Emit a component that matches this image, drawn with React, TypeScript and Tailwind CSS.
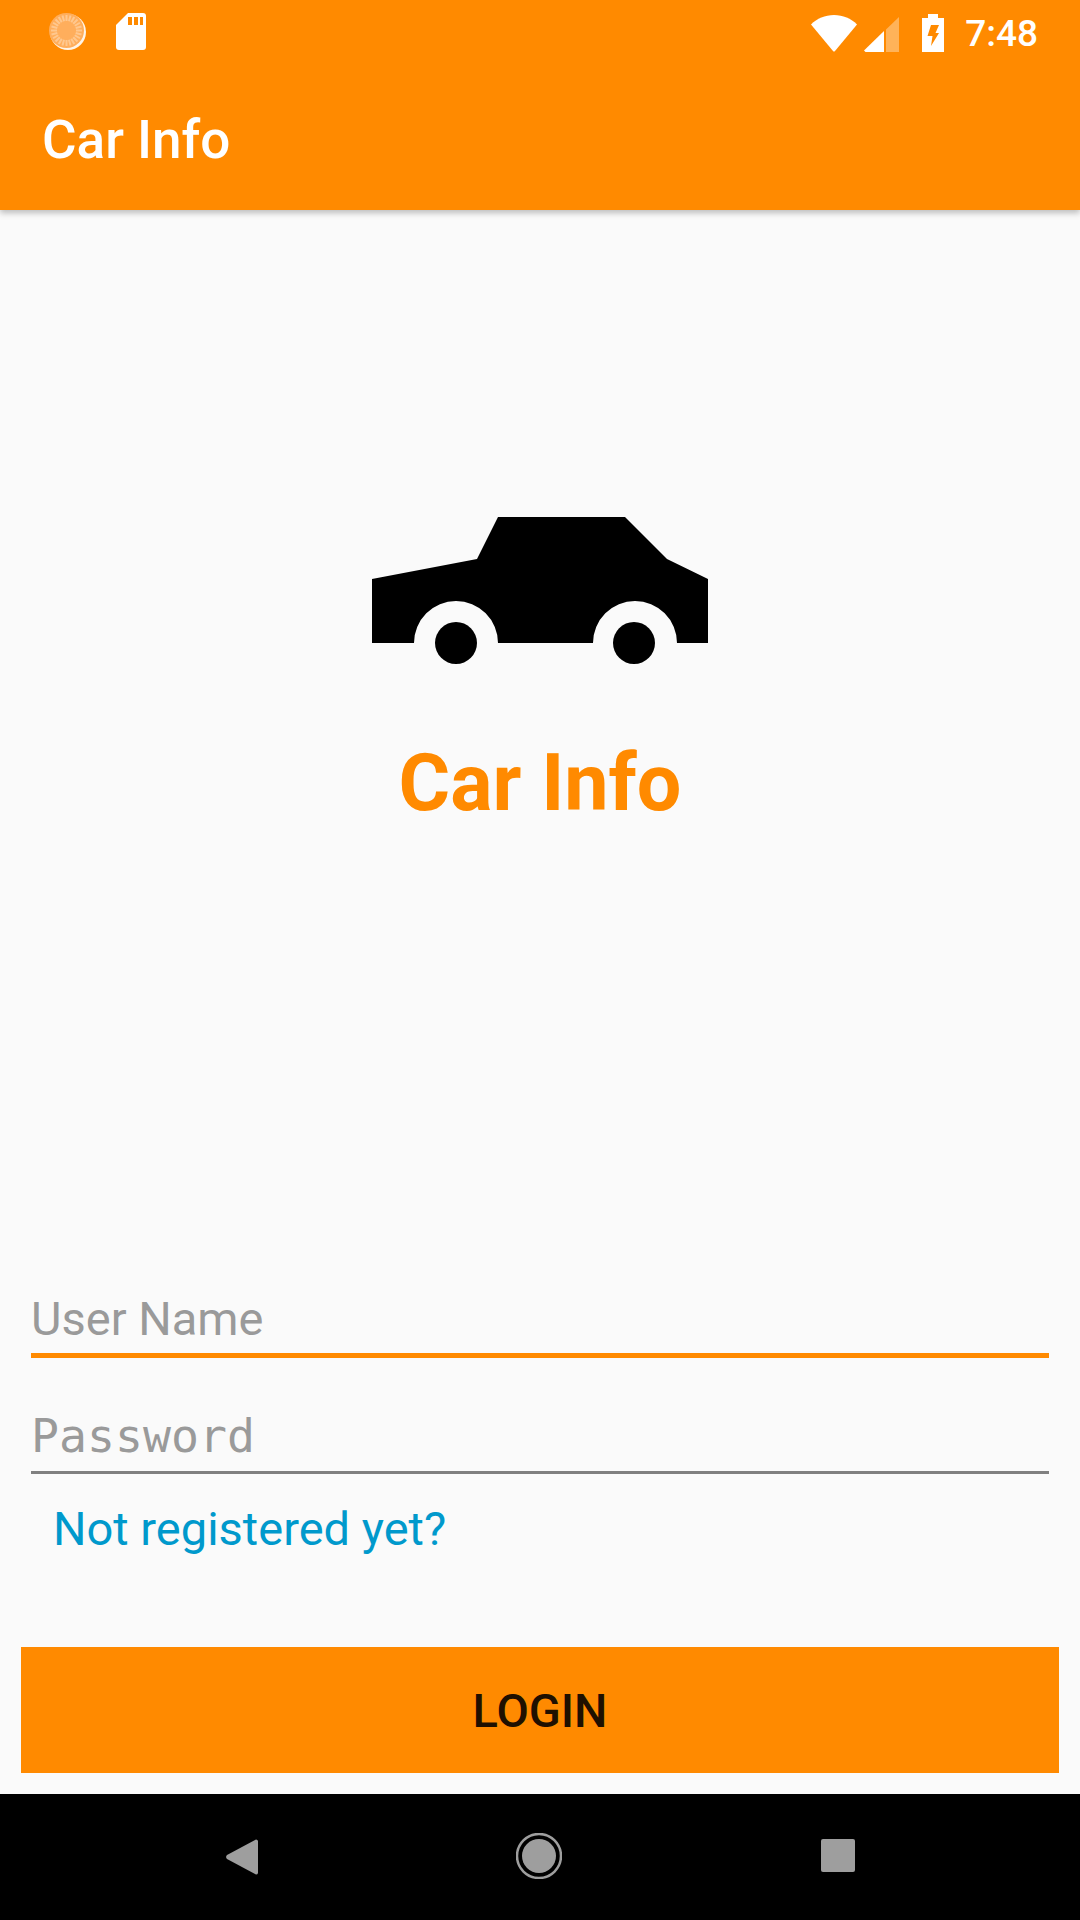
import React from 'react';

const ticks = Array.from({ length: 24 }, (_, i) => (i * 360) / 24);

const LoaderIcon = () => (
  <svg width="38" height="38" viewBox="0 0 38 38">
    <circle cx="19" cy="19" r="18" fill="#fff" opacity="0.9" />
    <circle cx="17.5" cy="17.5" r="17.5" fill="#ffae5c" />
    {ticks.map(a => (
      <line
        key={a}
        x1="17.5"
        y1="2"
        x2="17.5"
        y2="8"
        stroke="#ffc88f"
        strokeWidth="2"
        transform={`rotate(${a} 17.5 17.5)`}
      />
    ))}
  </svg>
);

const SdIcon = () => (
  <svg width="30" height="37" viewBox="0 0 30 37">
    <path
      d="M12 0H27a3 3 0 0 1 3 3V34a3 3 0 0 1-3 3H3a3 3 0 0 1-3-3V12Z"
      fill="#fff"
    />
    <rect x="12" y="4" width="4" height="8" fill="#ff8a00" />
    <rect x="18" y="4" width="4" height="8" fill="#ff8a00" />
    <rect x="24" y="4" width="3" height="8" fill="#ff8a00" />
  </svg>
);

const WifiIcon = () => (
  <svg width="46" height="37" viewBox="0 0 46 37">
    <path d="M0 9.5C6 3.5 14 0 23 0s17 3.5 23 9.5L24 36a1.4 1.4 0 0 1-2 0Z" fill="#fff" />
  </svg>
);

const SignalIcon = () => (
  <svg width="35" height="35" viewBox="0 0 35 35">
    <path d="M22 12.5 35 0V35H22Z" fill="#fff" opacity="0.35" />
    <path d="M0 33.5 20 14V35H1.5Z" fill="#fff" />
  </svg>
);

const BatteryIcon = () => (
  <svg width="22" height="38" viewBox="0 0 22 38">
    <path d="M6 0H16V4H22V38H0V4H6Z" fill="#fff" />
    <path d="M9 11H17L13.5 19H17L9 32 10.5 22H5.5Z" fill="#ff8a00" />
  </svg>
);

const CarLogo = () => (
  <svg width="336" height="147" viewBox="0 0 336 147" className="block">
    <path
      d="M126 0H253L295 42L336 62V126H305A42 42 0 0 0 221 126H126A42 42 0 0 0 42 126H0V62L105 42Z"
      fill="#000"
    />
    <circle cx="84" cy="126" r="21" fill="#000" />
    <circle cx="262" cy="126" r="21" fill="#000" />
  </svg>
);

const App: React.FC = () => {
  return (
    <div className="flex flex-col w-[1080px] h-[1920px] bg-[#fafafa] overflow-hidden font-['Roboto',sans-serif]">
      <header className="relative z-10 h-[210px] shrink-0 bg-[#ff8a00] shadow-[0_3px_6px_rgba(0,0,0,0.25)]">
        <div className="flex items-start justify-between h-[72px] pt-[13px] pl-[49px] pr-[42px]">
          <div className="flex items-start gap-[29px]">
            <LoaderIcon />
            <SdIcon />
          </div>
          <div className="flex items-center">
            <WifiIcon />
            <div className="ml-[7px] mt-[2px]">
              <SignalIcon />
            </div>
            <div className="ml-[23px]">
              <BatteryIcon />
            </div>
            <span className="ml-[21px] mt-[2px] text-[37px] leading-[38px] font-medium text-white">7:48</span>
          </div>
        </div>
        <h1 className="pl-[42px] mt-[38px] text-[53px] leading-[60px] font-medium text-white">Car Info</h1>
      </header>

      <main className="flex-1 flex flex-col items-center">
        <div className="mt-[307px]">
          <CarLogo />
        </div>
        <h2 className="mt-[73px] text-[79px] leading-[92px] font-bold text-[#ff8a00]">Car Info</h2>

        <div className="w-full px-[31px] mt-[461px]">
          <div className="h-[62px] pt-[1px] text-[47px] leading-[55px] text-[#9a9a9a] border-b-[5px] border-[#ff8a00] box-content">
            User Name
          </div>
          <div className="mt-[50px] h-[62px] pt-[1px] text-[46.5px] leading-[55px] text-[#9a9a9a] border-b-[3px] border-[#808080] box-content font-['DejaVu_Sans_Mono',monospace]">
            Password
          </div>
        </div>
        <div className="w-full pl-[53px] mt-[27px] text-[47px] leading-[55px] text-[#0099cc]">Not registered yet?</div>

        <button className="mt-[91px] w-[1038px] h-[126px] pt-[3px] bg-[#ff8a00] text-[#1f1000] text-[47px] font-medium">
          LOGIN
        </button>
      </main>

      <nav className="relative h-[126px] shrink-0 bg-black flex items-start pt-[45px] pl-[226px]">
        <svg width="32" height="36" viewBox="0 0 32 36" className="block">
          <path d="M30 0.5a2 2 0 0 1 2 1.5V34a2 2 0 0 1-2 1.5L1 20a2.6 2.6 0 0 1 0-4Z" fill="#9e9e9e" />
        </svg>
        <svg width="46" height="46" viewBox="0 0 46 46" className="block ml-[258px] -mt-[6px]">
          <circle cx="23" cy="23" r="22" fill="none" stroke="#9e9e9e" strokeWidth="2.5" />
          <circle cx="23" cy="23" r="17" fill="#9e9e9e" />
        </svg>
        <div className="ml-[259px] w-[34px] h-[33px] rounded-[2px] bg-[#9e9e9e]" />
      </nav>
    </div>
  );
};

export default App;
